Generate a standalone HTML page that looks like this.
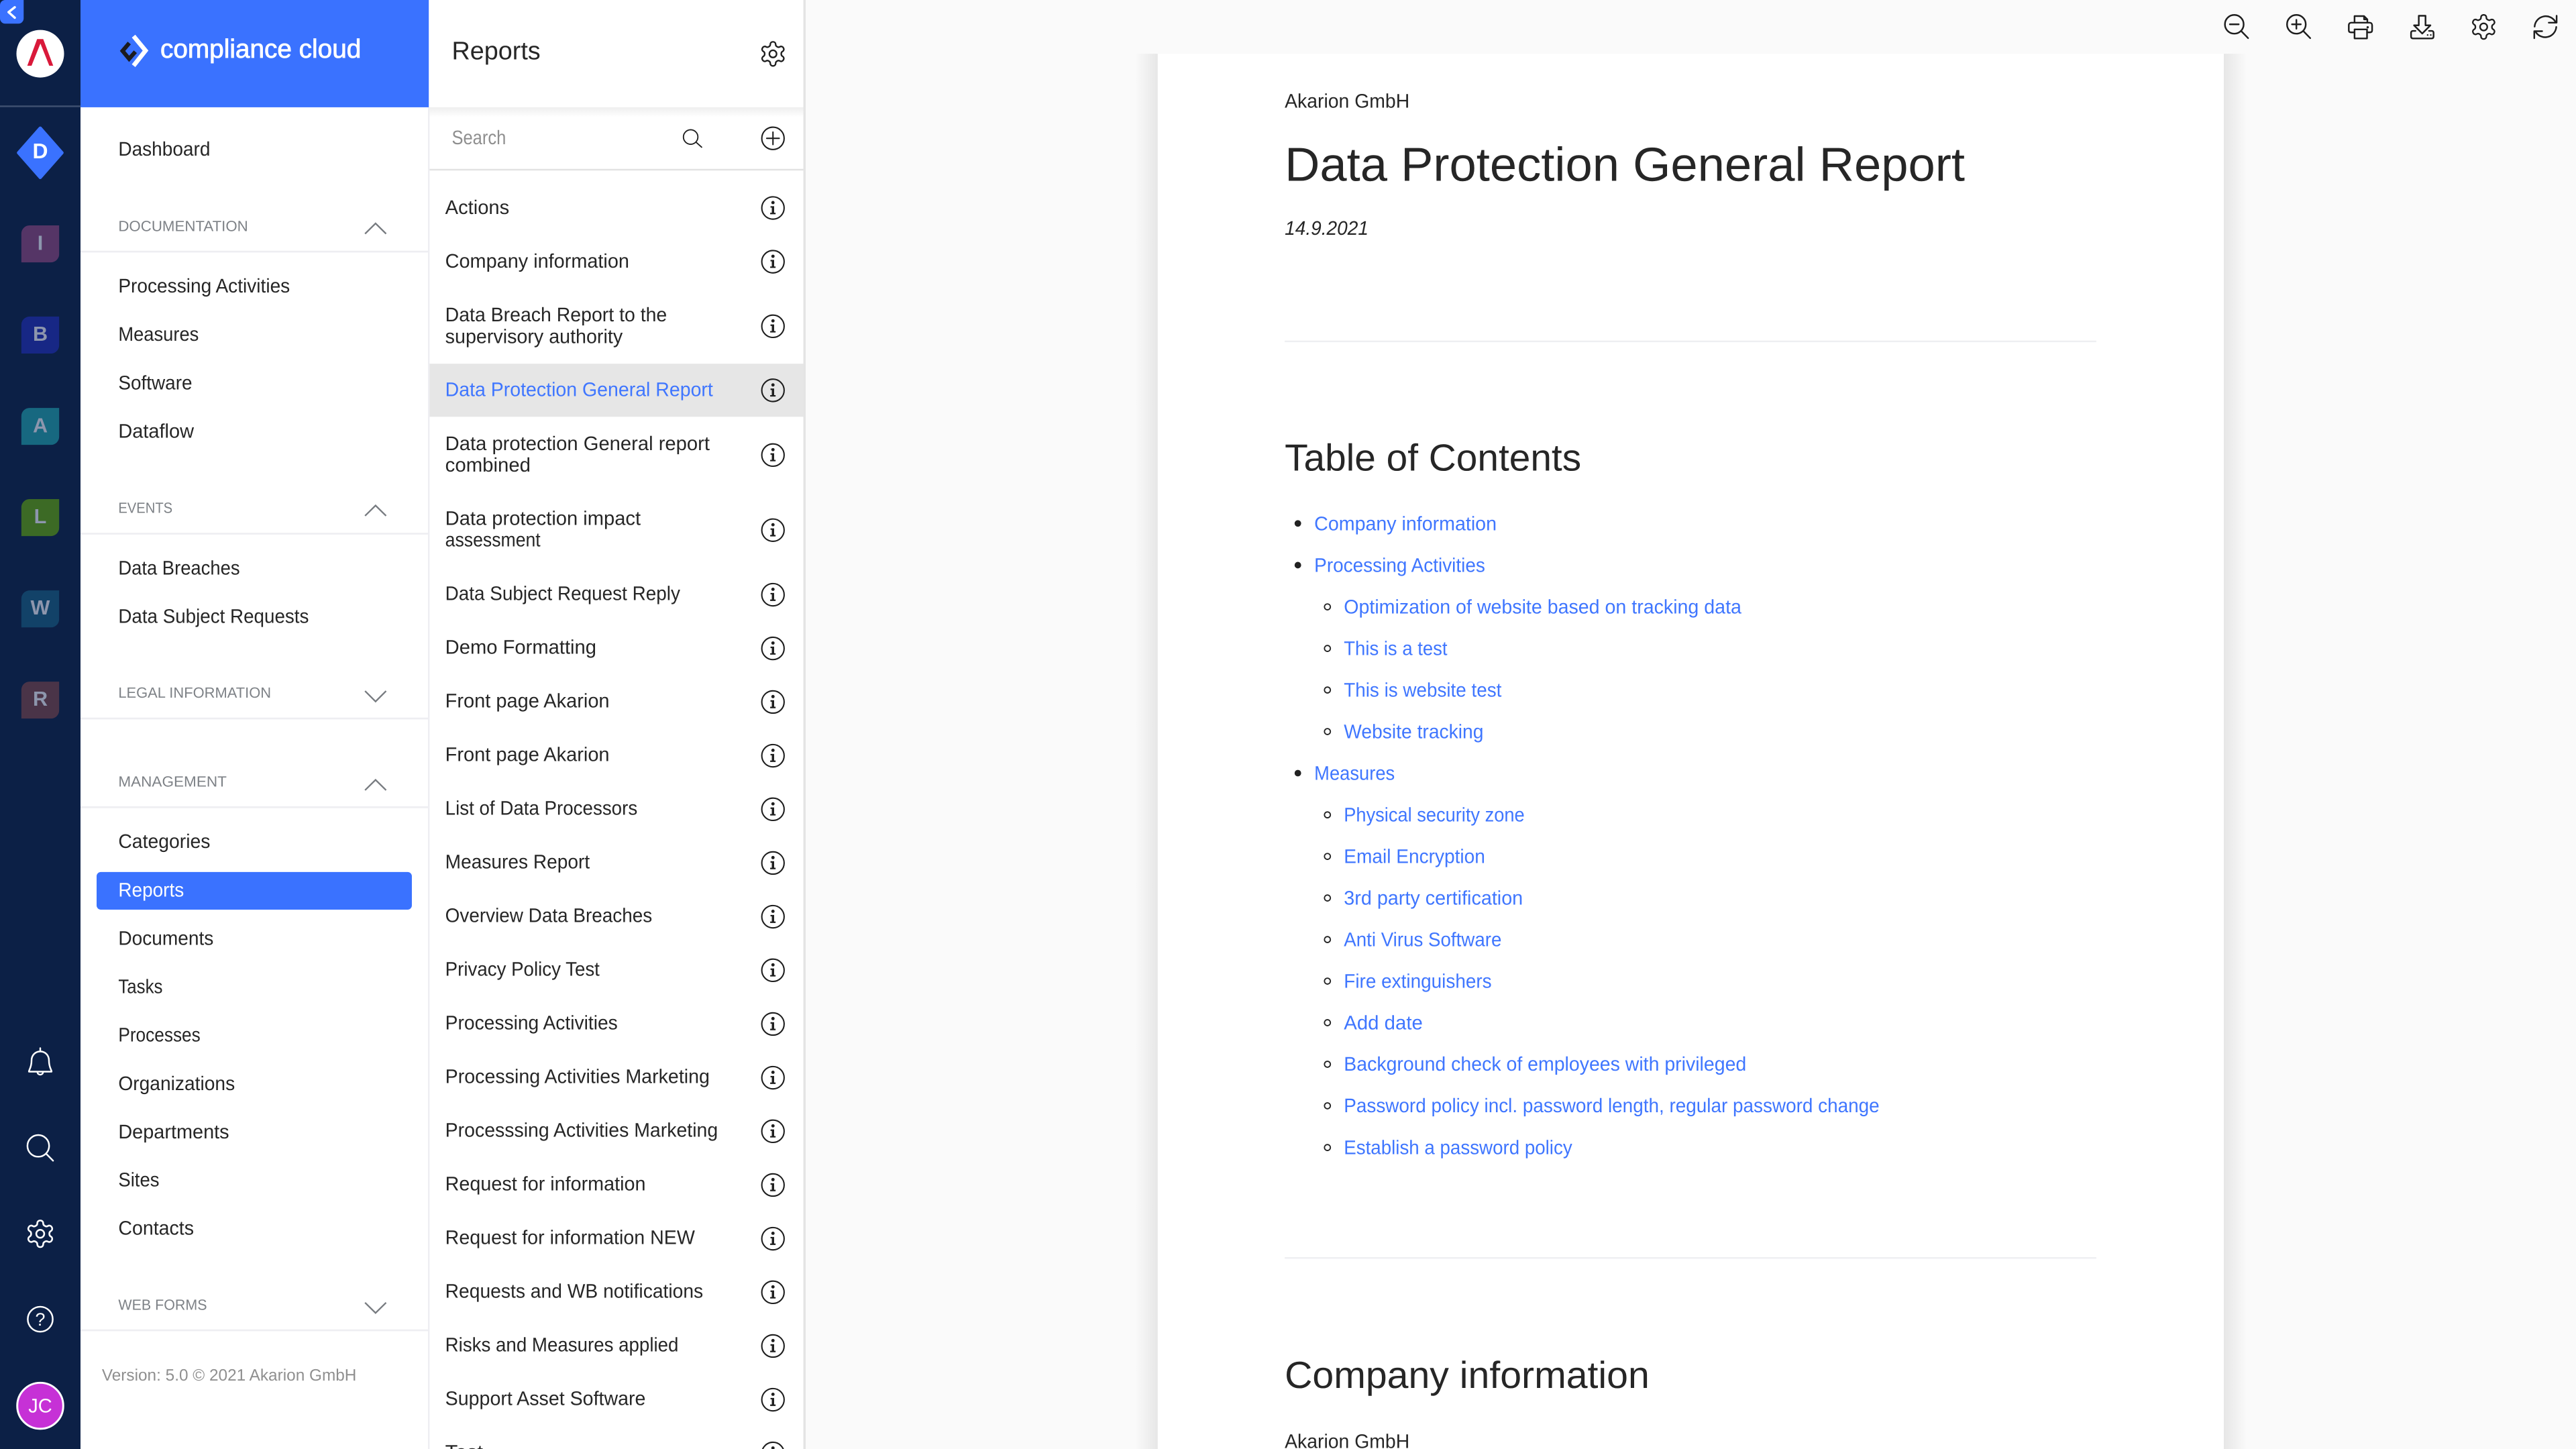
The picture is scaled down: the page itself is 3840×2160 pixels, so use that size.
<!DOCTYPE html>
<html lang="en">
<head>
<meta charset="utf-8">
<title>Data Protection General Report</title>
<style>
html,body{margin:0;padding:0;width:3840px;height:2160px;overflow:hidden;background:#fafafa}
svg{display:block}
text{font-family:"Liberation Sans",Arial,sans-serif;text-rendering:geometricPrecision;white-space:pre}
.m text{font-size:12px;fill:#262626}
.h text{font-size:9px;fill:#7d8186}
.d text{font-size:12px;fill:#262626}
.l text{font-size:12px;fill:#3f76ff}
.r text{font-size:12.5px;font-weight:700;fill:#8d96ad;text-anchor:middle}
</style>
</head>
<body>
<svg xmlns="http://www.w3.org/2000/svg" width="3840" height="2160" viewBox="0 0 1568 882">
<defs>
<linearGradient id="gl" x1="0" x2="1" y1="0" y2="0"><stop offset="0" stop-color="#e6e6e6" stop-opacity="0"/><stop offset="1" stop-color="#e6e6e6"/></linearGradient>
<linearGradient id="gr" x1="0" x2="1" y1="0" y2="0"><stop offset="0" stop-color="#e6e6e6"/><stop offset="1" stop-color="#e6e6e6" stop-opacity="0"/></linearGradient>
<linearGradient id="gt" x1="0" x2="0" y1="0" y2="1"><stop offset="0" stop-color="#eeeeee"/><stop offset="1" stop-color="#ffffff"/></linearGradient>
<symbol id="gear" viewBox="0 0 24 24" overflow="visible"><path fill="none" stroke="currentColor" stroke-width="1.3" stroke-linejoin="round" d="M12.22 2h-.44a2 2 0 0 0-2 2v.18a2 2 0 0 1-1 1.73l-.43.25a2 2 0 0 1-2 0l-.15-.08a2 2 0 0 0-2.73.73l-.22.38a2 2 0 0 0 .73 2.73l.15.1a2 2 0 0 1 1 1.72v.51a2 2 0 0 1-1 1.74l-.15.09a2 2 0 0 0-.73 2.73l.22.38a2 2 0 0 0 2.73.73l.15-.08a2 2 0 0 1 2 0l.43.25a2 2 0 0 1 1 1.73V20a2 2 0 0 0 2 2h.44a2 2 0 0 0 2-2v-.18a2 2 0 0 1 1-1.73l.43-.25a2 2 0 0 1 2 0l.15.08a2 2 0 0 0 2.73-.73l.22-.39a2 2 0 0 0-.73-2.73l-.15-.08a2 2 0 0 1-1-1.74v-.5a2 2 0 0 1 1-1.74l.15-.09a2 2 0 0 0 .73-2.73l-.22-.38a2 2 0 0 0-2.73-.73l-.15.08a2 2 0 0 1-2 0l-.43-.25a2 2 0 0 1-1-1.73V4a2 2 0 0 0-2-2z"/><circle cx="12" cy="12" r="3" fill="none" stroke="currentColor" stroke-width="1.3"/></symbol>
<g id="info"><circle r="6.8" fill="none" stroke="#1e1e1e" stroke-width=".85"/><circle cy="-3.3" r="1" fill="#1e1e1e"/><path d="M-1.5-1.1H.7V2.9H1.6V3.8H-1.7V2.9H-.7V-.2H-1.5z" fill="#1e1e1e"/></g>
</defs>

<!-- viewer background + document -->
<rect x="0" y="0" width="1568" height="882" fill="#fafafa"/>
<rect x="691" y="32.7" width="14" height="850" fill="url(#gl)"/>
<rect x="1353.5" y="32.7" width="14" height="850" fill="url(#gr)"/>
<rect x="704.7" y="32.7" width="648.9" height="850" fill="#fff"/>

<!-- document -->
<g class="d">
<text x="782" y="65.5" textLength="76" lengthAdjust="spacingAndGlyphs">Akarion GmbH</text>
<text x="782" y="110" style="font-size:29px" textLength="414" lengthAdjust="spacingAndGlyphs">Data Protection General Report</text>
<text x="782" y="143" font-style="italic" textLength="51" lengthAdjust="spacingAndGlyphs">14.9.2021</text>
<text x="782" y="286.4" style="font-size:23px" textLength="180.5" lengthAdjust="spacingAndGlyphs">Table of Contents</text>
<text x="782" y="844.8" style="font-size:23px" textLength="222" lengthAdjust="spacingAndGlyphs">Company information</text>
<text x="782" y="881.3" textLength="76" lengthAdjust="spacingAndGlyphs">Akarion GmbH</text>
</g>
<rect x="782" y="207.3" width="494" height="1" fill="#eeeff2"/>
<rect x="782" y="765.2" width="494" height="1" fill="#eeeff2"/>
<g fill="#222"><circle cx="790" cy="318.6" r="2"/><circle cx="790" cy="344" r="2"/><circle cx="790" cy="470.6" r="2"/></g>
<g fill="none" stroke="#222" stroke-width=".75">
<circle cx="808" cy="369.4" r="1.8"/><circle cx="808" cy="394.7" r="1.8"/><circle cx="808" cy="420" r="1.8"/><circle cx="808" cy="445.3" r="1.8"/><circle cx="808" cy="496" r="1.8"/><circle cx="808" cy="521.3" r="1.8"/><circle cx="808" cy="546.6" r="1.8"/><circle cx="808" cy="571.9" r="1.8"/><circle cx="808" cy="597.2" r="1.8"/><circle cx="808" cy="622.5" r="1.8"/><circle cx="808" cy="647.8" r="1.8"/><circle cx="808" cy="673.1" r="1.8"/><circle cx="808" cy="698.5" r="1.8"/>
</g>
<g class="l">
<text x="800" y="322.8" textLength="111" lengthAdjust="spacingAndGlyphs">Company information</text>
<text x="800" y="348.1" textLength="104" lengthAdjust="spacingAndGlyphs">Processing Activities</text>
<text x="818" y="373.4" textLength="242" lengthAdjust="spacingAndGlyphs">Optimization of website based on tracking data</text>
<text x="818" y="398.7" textLength="63" lengthAdjust="spacingAndGlyphs">This is a test</text>
<text x="818" y="424" textLength="96" lengthAdjust="spacingAndGlyphs">This is website test</text>
<text x="818" y="449.3" textLength="85" lengthAdjust="spacingAndGlyphs">Website tracking</text>
<text x="800" y="474.7" textLength="49" lengthAdjust="spacingAndGlyphs">Measures</text>
<text x="818" y="500" textLength="110" lengthAdjust="spacingAndGlyphs">Physical security zone</text>
<text x="818" y="525.3" textLength="86" lengthAdjust="spacingAndGlyphs">Email Encryption</text>
<text x="818" y="550.6" textLength="109" lengthAdjust="spacingAndGlyphs">3rd party certification</text>
<text x="818" y="575.9" textLength="96" lengthAdjust="spacingAndGlyphs">Anti Virus Software</text>
<text x="818" y="601.2" textLength="90" lengthAdjust="spacingAndGlyphs">Fire extinguishers</text>
<text x="818" y="626.5" textLength="48" lengthAdjust="spacingAndGlyphs">Add date</text>
<text x="818" y="651.8" textLength="245" lengthAdjust="spacingAndGlyphs">Background check of employees with privileged</text>
<text x="818" y="677.1" textLength="326" lengthAdjust="spacingAndGlyphs">Password policy incl. password length, regular password change</text>
<text x="818" y="702.5" textLength="139" lengthAdjust="spacingAndGlyphs">Establish a password policy</text>
</g>

<!-- top toolbar -->
<rect x="490" y="0" width="1078" height="32.7" fill="#fafafa"/>
<g fill="none" stroke="#1e1e1e" stroke-width="1" stroke-linecap="round" stroke-linejoin="round">
<circle cx="1360" cy="14.8" r="5.7"/><path d="M1364.2 18.9L1368.4 23.2M1357.3 14.8H1362.7"/>
<circle cx="1397.8" cy="14.8" r="5.7"/><path d="M1402 18.9L1406.2 23.2M1395.1 14.8H1400.5M1397.8 12.1V17.5"/>
<path d="M1433.2 13.6V9.8H1439L1441 11.8V13.6M1439 9.8V11.8H1441"/>
<path d="M1433 19.7H1431C1430.1 19.7 1429.7 19.2 1429.7 18.5V15.4C1429.7 14.4 1430.3 13.8 1431.3 13.8H1442.3C1443.3 13.8 1443.9 14.4 1443.9 15.4V18.5C1443.9 19.2 1443.5 19.7 1442.6 19.7H1440.8"/>
<path d="M1433.2 17.9H1440.8V23.4H1433.2Z"/>
<path d="M1472.3 9.6H1476.4V15.4H1479.4L1474.4 20.4L1469.4 15.4H1472.3Z"/>
<path d="M1470.3 18.8H1468.8C1468 18.8 1467.6 19.3 1467.6 20V22.2C1467.6 23 1468 23.4 1468.8 23.4H1480.1C1480.9 23.4 1481.3 23 1481.3 22.2V20C1481.3 19.3 1480.9 18.8 1480.1 18.8H1478.5"/>
<path d="M1542.8 16.2A6.8 6.8 0 0 1 1555.6 13.5M1556.2 9.6V13.8H1551.4M1556 16.4A6.8 6.8 0 0 1 1543.3 19.2M1542.6 23.3V19H1547.4"/>
</g>
<g fill="#1e1e1e"><circle cx="1441.2" cy="16.6" r=".7"/><circle cx="1477.7" cy="21.3" r=".5"/><circle cx="1479.6" cy="21.3" r=".5"/></g>
<use href="#gear" x="1503" y="7.6" width="17.6" height="17.6" style="color:#1e1e1e"/>

<!-- reports panel -->
<rect x="261" y="0" width="228" height="882" fill="#fff"/>
<rect x="489" y="0" width="1.4" height="882" fill="#e4e4e4"/>
<rect x="261" y="65.3" width="228" height="6" fill="url(#gt)"/>
<rect x="261" y="102.8" width="228" height="1" fill="#e2e2e2"/>
<rect x="261" y="221.4" width="228" height="32.3" fill="#e6e6e6"/>
<text x="275" y="36.2" style="font-size:15.5px;fill:#262626" textLength="54" lengthAdjust="spacingAndGlyphs">Reports</text>
<use href="#gear" x="461.7" y="24" width="17.6" height="17.6" style="color:#1e1e1e"/>
<text x="275" y="87.8" style="font-size:12px;fill:#8f8f8f" textLength="33" lengthAdjust="spacingAndGlyphs">Search</text>
<g fill="none" stroke="#1e1e1e" stroke-width=".75" stroke-linecap="round">
<circle cx="420.4" cy="83.4" r="4.4"/><path d="M423.6 86.5L427.1 89.6"/>
</g>
<g fill="none" stroke="#1e1e1e" stroke-width=".85" stroke-linecap="round">
<circle cx="470.5" cy="84.2" r="6.8"/><path d="M466.7 84.2H474.3M470.5 80.4V88"/>
</g>
<g class="m">
<text x="271" y="130.2" textLength="39" lengthAdjust="spacingAndGlyphs">Actions</text>
<text x="271" y="163" textLength="112" lengthAdjust="spacingAndGlyphs">Company information</text>
<text x="271" y="195.7" textLength="135" lengthAdjust="spacingAndGlyphs">Data Breach Report to the</text>
<text x="271" y="208.8" textLength="108" lengthAdjust="spacingAndGlyphs">supervisory authority</text>
<text x="271" y="241.2" style="fill:#3f76ff" textLength="163" lengthAdjust="spacingAndGlyphs">Data Protection General Report</text>
<text x="271" y="274" textLength="161" lengthAdjust="spacingAndGlyphs">Data protection General report</text>
<text x="271" y="287" textLength="52" lengthAdjust="spacingAndGlyphs">combined</text>
<text x="271" y="319.6" textLength="119" lengthAdjust="spacingAndGlyphs">Data protection impact</text>
<text x="271" y="332.7" textLength="58" lengthAdjust="spacingAndGlyphs">assessment</text>
<text x="271" y="365.3" textLength="143" lengthAdjust="spacingAndGlyphs">Data Subject Request Reply</text>
<text x="271" y="398" textLength="92" lengthAdjust="spacingAndGlyphs">Demo Formatting</text>
<text x="271" y="430.7" textLength="100" lengthAdjust="spacingAndGlyphs">Front page Akarion</text>
<text x="271" y="463.3" textLength="100" lengthAdjust="spacingAndGlyphs">Front page Akarion</text>
<text x="271" y="496" textLength="117" lengthAdjust="spacingAndGlyphs">List of Data Processors</text>
<text x="271" y="528.6" textLength="88" lengthAdjust="spacingAndGlyphs">Measures Report</text>
<text x="271" y="561.3" textLength="126" lengthAdjust="spacingAndGlyphs">Overview Data Breaches</text>
<text x="271" y="594" textLength="94" lengthAdjust="spacingAndGlyphs">Privacy Policy Test</text>
<text x="271" y="626.6" textLength="105" lengthAdjust="spacingAndGlyphs">Processing Activities</text>
<text x="271" y="659.3" textLength="161" lengthAdjust="spacingAndGlyphs">Processing Activities Marketing</text>
<text x="271" y="692" textLength="166" lengthAdjust="spacingAndGlyphs">Processsing Activities Marketing</text>
<text x="271" y="724.6" textLength="122" lengthAdjust="spacingAndGlyphs">Request for information</text>
<text x="271" y="757.3" textLength="152" lengthAdjust="spacingAndGlyphs">Request for information NEW</text>
<text x="271" y="790" textLength="157" lengthAdjust="spacingAndGlyphs">Requests and WB notifications</text>
<text x="271" y="822.6" textLength="142" lengthAdjust="spacingAndGlyphs">Risks and Measures applied</text>
<text x="271" y="855.3" textLength="122" lengthAdjust="spacingAndGlyphs">Support Asset Software</text>
<text x="271" y="888" textLength="23" lengthAdjust="spacingAndGlyphs">Test</text>
</g>
<use href="#info" x="470.5" y="126.6"/><use href="#info" x="470.5" y="159.3"/><use href="#info" x="470.5" y="198.6"/><use href="#info" x="470.5" y="237.6"/><use href="#info" x="470.5" y="277"/><use href="#info" x="470.5" y="322.7"/><use href="#info" x="470.5" y="362"/><use href="#info" x="470.5" y="394.7"/><use href="#info" x="470.5" y="427.3"/><use href="#info" x="470.5" y="460"/><use href="#info" x="470.5" y="492.6"/><use href="#info" x="470.5" y="525.3"/><use href="#info" x="470.5" y="558"/><use href="#info" x="470.5" y="590.6"/><use href="#info" x="470.5" y="623.3"/><use href="#info" x="470.5" y="656"/><use href="#info" x="470.5" y="688.6"/><use href="#info" x="470.5" y="721.3"/><use href="#info" x="470.5" y="754"/><use href="#info" x="470.5" y="786.6"/><use href="#info" x="470.5" y="819.3"/><use href="#info" x="470.5" y="852"/><use href="#info" x="470.5" y="884.7"/>

<!-- nav column -->
<rect x="49" y="0" width="212" height="882" fill="#fff"/>
<rect x="260.5" y="65.3" width="1" height="817" fill="#eeeef2"/>
<rect x="49" y="0" width="212" height="65.3" fill="#3a72ff"/>
<g fill="none" stroke-linejoin="miter">
<path d="M81.3 22L88.6 30.8L81.3 40" stroke="#fff" stroke-width="2.7"/>
<path d="M78.7 26.2L74.6 31L78.6 35.8L82.4 31.5" stroke="#1b1b1f" stroke-width="2.5"/>
</g>
<text x="97.6" y="35.2" style="font-size:16px;fill:#fff;stroke:#fff;stroke-width:.35px" textLength="122.2" lengthAdjust="spacingAndGlyphs">compliance cloud</text>
<rect x="58.8" y="530.8" width="191.9" height="22.9" rx="2.6" fill="#3a72ff"/>
<g class="m">
<text x="72" y="94.8" textLength="56" lengthAdjust="spacingAndGlyphs">Dashboard</text>
<text x="72" y="178" textLength="104.5" lengthAdjust="spacingAndGlyphs">Processing Activities</text>
<text x="72" y="207.5" textLength="49" lengthAdjust="spacingAndGlyphs">Measures</text>
<text x="72" y="237" textLength="45" lengthAdjust="spacingAndGlyphs">Software</text>
<text x="72" y="266.5" textLength="46" lengthAdjust="spacingAndGlyphs">Dataflow</text>
<text x="72" y="349.7" textLength="74" lengthAdjust="spacingAndGlyphs">Data Breaches</text>
<text x="72" y="379.2" textLength="116" lengthAdjust="spacingAndGlyphs">Data Subject Requests</text>
<text x="72" y="516.2" textLength="56" lengthAdjust="spacingAndGlyphs">Categories</text>
<text x="72" y="545.7" style="fill:#fff" textLength="40" lengthAdjust="spacingAndGlyphs">Reports</text>
<text x="72" y="575.2" textLength="58" lengthAdjust="spacingAndGlyphs">Documents</text>
<text x="72" y="604.5" textLength="27" lengthAdjust="spacingAndGlyphs">Tasks</text>
<text x="72" y="634" textLength="50" lengthAdjust="spacingAndGlyphs">Processes</text>
<text x="72" y="663.5" textLength="71" lengthAdjust="spacingAndGlyphs">Organizations</text>
<text x="72" y="693" textLength="67.5" lengthAdjust="spacingAndGlyphs">Departments</text>
<text x="72" y="722.2" textLength="25" lengthAdjust="spacingAndGlyphs">Sites</text>
<text x="72" y="751.5" textLength="46" lengthAdjust="spacingAndGlyphs">Contacts</text>
</g>
<g class="h">
<text x="72" y="140.6" textLength="79" lengthAdjust="spacingAndGlyphs">DOCUMENTATION</text>
<text x="72" y="312.2" textLength="33" lengthAdjust="spacingAndGlyphs">EVENTS</text>
<text x="72" y="424.7" textLength="93" lengthAdjust="spacingAndGlyphs">LEGAL INFORMATION</text>
<text x="72" y="478.7" textLength="66" lengthAdjust="spacingAndGlyphs">MANAGEMENT</text>
<text x="72" y="797.2" textLength="54" lengthAdjust="spacingAndGlyphs">WEB FORMS</text>
</g>
<text x="62" y="840.3" style="font-size:10px;fill:#8f8f8f" textLength="155" lengthAdjust="spacingAndGlyphs">Version: 5.0 © 2021 Akarion GmbH</text>
<g fill="#eeeef2"><rect x="49" y="152.6" width="211.5" height="1.1"/><rect x="49" y="324.3" width="211.5" height="1.1"/><rect x="49" y="436.8" width="211.5" height="1.1"/><rect x="49" y="490.8" width="211.5" height="1.1"/><rect x="49" y="809.2" width="211.5" height="1.1"/></g>
<g fill="none" stroke="#777b80" stroke-width=".95">
<path d="M222.2 142.3L228.6 136L235 142.3"/>
<path d="M222.2 314L228.6 307.7L235 314"/>
<path d="M222.2 420.6L228.6 427L235 420.6"/>
<path d="M222.2 481L228.6 474.7L235 481"/>
<path d="M222.2 792.9L228.6 799.2L235 792.9"/>
</g>

<!-- rail -->
<rect x="0" y="0" width="49" height="882" fill="#0c2046"/>
<rect x="0" y="64.2" width="49" height="1" fill="#3f5070"/>
<path d="M0 3.2A3.2 3.2 0 0 1 3.2 0H14.4V11.2A3.2 3.2 0 0 1 11.2 14.4H3.2A3.2 3.2 0 0 1 0 11.2Z" fill="#3a72ff"/>
<path d="M9 4.6L5.2 7.6L9 11" transform="translate(0 -.2)" fill="none" stroke="#fff" stroke-width="1.4" stroke-linecap="round" stroke-linejoin="round"/>
<circle cx="24.5" cy="32.7" r="14.5" fill="#fff"/>
<path d="M16.6 40L22.6 23.8H26.3L32.4 40H30L24.6 26.5L19.2 40Z" fill="#d9193a"/>
<path d="M24.5 78L37.7 93L24.5 108L11.3 93Z" fill="#3a72ff" stroke="#3a72ff" stroke-width="2" stroke-linejoin="round"/>
<text x="24.5" y="96.4" style="font-size:13px;font-weight:700;fill:#fff;text-anchor:middle">D</text>
<path d="M13 142.2a5 5 0 0 1 5-5h18v17.5a5 5 0 0 1-5 5H13Z" fill="#553566"/>
<path d="M13 197.7a5 5 0 0 1 5-5h18v17.5a5 5 0 0 1-5 5H13Z" fill="#172785"/>
<path d="M13 253.3a5 5 0 0 1 5-5h18v17.5a5 5 0 0 1-5 5H13Z" fill="#176880"/>
<path d="M13 308.8a5 5 0 0 1 5-5h18v17.5a5 5 0 0 1-5 5H13Z" fill="#3c6a25"/>
<path d="M13 364.4a5 5 0 0 1 5-5h18v17.5a5 5 0 0 1-5 5H13Z" fill="#124268"/>
<path d="M13 419.9a5 5 0 0 1 5-5h18v17.5a5 5 0 0 1-5 5H13Z" fill="#4a3448"/>
<g class="r">
<text x="24.5" y="152.2">I</text>
<text x="24.5" y="207.5">B</text>
<text x="24.5" y="263.1">A</text>
<text x="24.5" y="318.6">L</text>
<text x="24.5" y="374.1">W</text>
<text x="24.5" y="429.6">R</text>
</g>
<g fill="none" stroke="#fff" stroke-width="1" stroke-linecap="round" stroke-linejoin="round">
<path d="M24.5 639.4V638M19.2 645.5C19.2 642.4 21.4 640 24.5 640C27.6 640 29.8 642.4 29.8 645.5C29.8 649.8 31.4 651.2 31.4 652.3H17.6C17.6 651.2 19.2 649.8 19.2 645.5Z"/>
<path d="M22.8 652.8C23.2 654.6 25.8 654.6 26.2 652.8"/>
<circle cx="23.3" cy="697.5" r="6.6"/><path d="M28 702.2L32.3 706.5"/>
<circle cx="24.5" cy="803" r="7.6"/>
</g>
<use href="#gear" x="14.8" y="741.3" width="19.4" height="19.4" style="color:#fff"/>
<text x="24.5" y="806.9" style="font-size:11px;fill:#fff;text-anchor:middle">?</text>
<circle cx="24.5" cy="855.7" r="14" fill="#c631d6" stroke="#fff" stroke-width="1.2"/>
<text x="24.5" y="859.8" style="font-size:12px;fill:#fff;text-anchor:middle" textLength="14.5" lengthAdjust="spacingAndGlyphs">JC</text>
</svg>
</body>
</html>
